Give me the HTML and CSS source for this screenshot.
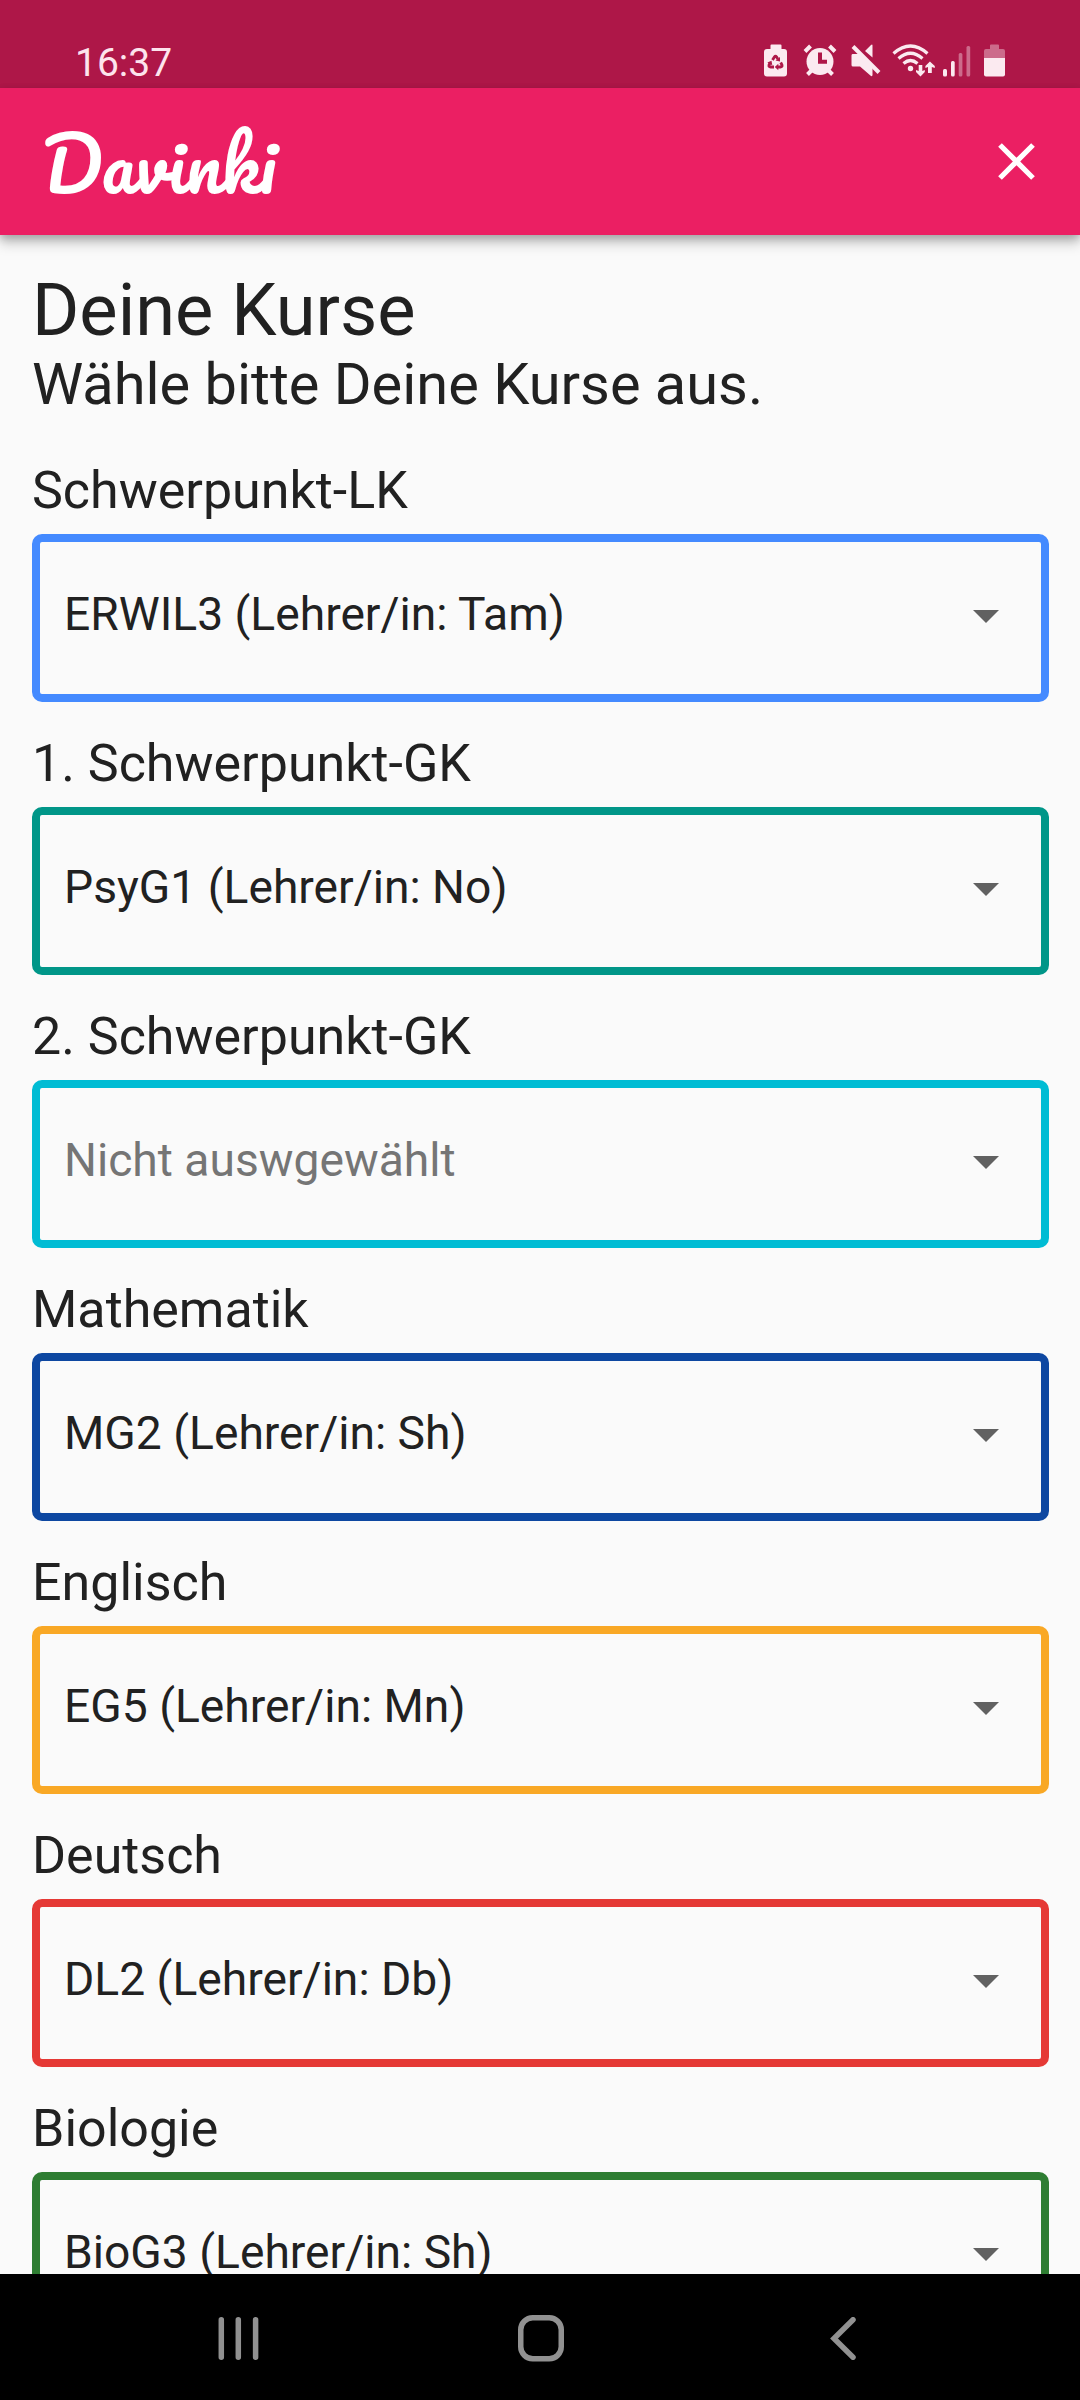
FILE: index.html
```html
<!DOCTYPE html>
<html lang="de">
<head>
<meta charset="utf-8">
<title>Davinki</title>
<link rel="stylesheet" href="styles.css">
</head>
<body>
<div class="status">
  <span class="time">16:37</span>
  <svg class="status-icons" width="250" height="40" viewBox="760 40 250 40">
    <g fill="#fbeaf0">
      <path d="M770.500 45.500a1 1 0 0 1 1-1h9a1 1 0 0 1 1 1V49h2.500a3 3 0 0 1 3 3v21.500a3 3 0 0 1-3 3h-17a3 3 0 0 1-3-3V52a3 3 0 0 1 3-3h3.500z"/>
      <path d="M772.500 60l2-3.200q1-1.300 2 0l1.300 2.200M780.700 62.500l1.300 2.500q.5 2-1.500 2h-3M774 67h-3.500q-2 0-1.500-2l1-2" fill="none" stroke="#ae1748" stroke-width="2.800"/>
      <path d="M775.500 60.500l4.500 1v-4.500zM778.300 63.800v6.400l-3.500-3.200zM767.300 62.500l4.200-1.700.8 4.400z" fill="#ae1748"/>
      <circle cx="820" cy="61.500" r="13.500"/>
      <path d="M805 51.500l5.500-5.500M835 51.500l-5.500-5.500M811.500 70.500l-4 4M828.500 70.500l4 4" fill="none" stroke="#fbeaf0" stroke-width="4"/>
      <path d="M820 52.500v9.200h7" fill="none" stroke="#ae1748" stroke-width="4"/>
      <path d="M852.500 54h6.500l13.500 13.500V75q0 1.500-1.500 1L860 66.500h-7q-1.500 0-1.500-1.500v-9.500q0-1.500 1-1.500zM865 51l6-6q1.500-1 1.500.5V57.500z"/>
      <path d="M853 46.500l26 26" fill="none" stroke="#fbeaf0" stroke-width="4"/>
      <g fill="none" stroke="#fbeaf0" stroke-width="3.200">
        <path d="M893.500 53.500q17-15 34 0M898.500 58.500q12-10.500 24 0M903.500 63.500q7-6 14 0"/>
      </g>
      <circle cx="910.500" cy="68.500" r="2.700"/>
      <path d="M918.700 65h3.600v6l2.500-1v2l-4.300 4.500-4.500-4.500v-2l2.700 1zM928 73h3.800v-6l3 1v-2l-4.900-4.500-4.500 4.500v2l2.600-1z"/>
      <rect x="943" y="69" width="4" height="7.500" rx="1.500"/>
      <rect x="951" y="61" width="3.700" height="15.500" rx="1.500"/>
      <g opacity=".4">
        <rect x="958.700" y="53" width="3.700" height="23.500" rx="1.500"/>
        <rect x="966.500" y="46" width="3.700" height="30.500" rx="1.500"/>
        <path d="M990 45.500a1 1 0 0 1 1-1h7a1 1 0 0 1 1 1V49h4q2 0 2 2v7h-21v-7q0-2 2-2h4z"/>
      </g>
      <path d="M984 58h21v16.500q0 2-2 2h-17q-2 0-2-2z"/>
    </g>
  </svg>
</div>
<header class="appbar">
  <span class="logo">Davinki</span>
  <svg width="37" height="37" viewBox="0 0 37 37"><path d="M2 2l33 33M35 2L2 35" stroke="#fff" stroke-width="5.200"/></svg>
</header>
<main class="content">
  <h1 class="title">Deine Kurse</h1>
  <p class="subtitle">Wähle bitte Deine Kurse aus.</p>
  <section class="course"><h2 class="label">Schwerpunkt-LK</h2><div class="select blue"><span>ERWIL3 (Lehrer/in: Tam)</span><i class="arrow"></i></div></section>
  <section class="course"><h2 class="label">1. Schwerpunkt-GK</h2><div class="select teal"><span>PsyG1 (Lehrer/in: No)</span><i class="arrow"></i></div></section>
  <section class="course"><h2 class="label">2. Schwerpunkt-GK</h2><div class="select cyan empty"><span>Nicht auswgewählt</span><i class="arrow"></i></div></section>
  <section class="course"><h2 class="label">Mathematik</h2><div class="select navy"><span>MG2 (Lehrer/in: Sh)</span><i class="arrow"></i></div></section>
  <section class="course"><h2 class="label">Englisch</h2><div class="select amber"><span>EG5 (Lehrer/in: Mn)</span><i class="arrow"></i></div></section>
  <section class="course"><h2 class="label">Deutsch</h2><div class="select red"><span>DL2 (Lehrer/in: Db)</span><i class="arrow"></i></div></section>
  <section class="course"><h2 class="label">Biologie</h2><div class="select green"><span>BioG3 (Lehrer/in: Sh)</span><i class="arrow"></i></div></section>
</main>
<nav class="navbar">
  <svg width="42" height="43" viewBox="0 0 42 43"><path d="M4.300 2.750v37.500M21.300 2.750v37.500M38.600 2.750v37.500"/></svg>
  <svg class="home" width="46" height="47" viewBox="0 0 46 47"><rect x="2.750" y="2.750" width="40.500" height="41" rx="12"/></svg>
  <svg width="26" height="43" viewBox="0 0 26 43"><path d="M23 2.750L4 21.500l19 18.750"/></svg>
</nav>
</body>
</html>
```
FILE: styles.css
```css
* { box-sizing: border-box; }
body {
  margin: 0;
  width: 1080px;
  height: 2400px;
  display: flex;
  flex-direction: column;
  overflow: hidden;
  background: #fafafa;
  color: #212121;
  font-family: Roboto, "Liberation Sans", sans-serif;
}
h1, h2, p { margin: 0; font-weight: 400; white-space: nowrap; }
svg { display: block; }
.status {
  flex: none;
  height: 88px;
  padding: 40px 70px 0 75px;
  display: flex;
  justify-content: space-between;
  background: #ae1748;
  color: #fde4ed;
}
.time { font-size: 39px; line-height: 46px; }
.appbar {
  flex: none;
  height: 147px;
  padding: 0 45px 0 42px;
  display: flex;
  align-items: center;
  justify-content: space-between;
  background: #eb1f63;
  color: #fff;
  box-shadow: 0 8px 12px rgba(0, 0, 0, .22), 0 3px 8px rgba(0, 0, 0, .18);
  z-index: 1;
}
.logo {
  padding-top: 4px;
  font: 400 72.19px/100px Pacifico, "Dancing Script", cursive;
}
.content {
  flex: 1;
  min-height: 0;
  overflow: hidden;
  padding: 33px 31px 0 32px;
}
.title { font-size: 72.19px; line-height: 86px; }
.subtitle { margin-bottom: 8px; font-size: 57.75px; line-height: 60px; }
.label { font-size: 51.975px; line-height: 62px; }
.course { height: 273px; padding-top: 38px; }
.select {
  height: 168px;
  margin-top: 12px;
  padding: 0 42px 0 24px;
  display: flex;
  align-items: center;
  justify-content: space-between;
  border: 8px solid;
  border-radius: 10px;
  font-size: 46.2px;
  line-height: 56px;
}
.select span { color: #212121; padding-bottom: 8px; }
.select.empty span { color: #757575; }
.arrow {
  margin-top: -3px;
  width: 26px;
  height: 13px;
  background: #616161;
  clip-path: polygon(0 0, 100% 0, 50% 100%);
}
.blue { border-color: #448aff; }
.teal { border-color: #009688; }
.cyan { border-color: #00bcd4; }
.navy { border-color: #0d47a1; }
.amber { border-color: #f9a825; }
.red { border-color: #e53935; }
.green { border-color: #2e7d32; }
.navbar {
  flex: none;
  height: 126px;
  padding: 3px 224px 0 217px;
  display: flex;
  align-items: center;
  justify-content: space-between;
  background: #000;
}
.navbar svg { fill: none; stroke: #919191; stroke-width: 5.5; stroke-linecap: round; }
.navbar .home { margin-right: 8px; }
```
